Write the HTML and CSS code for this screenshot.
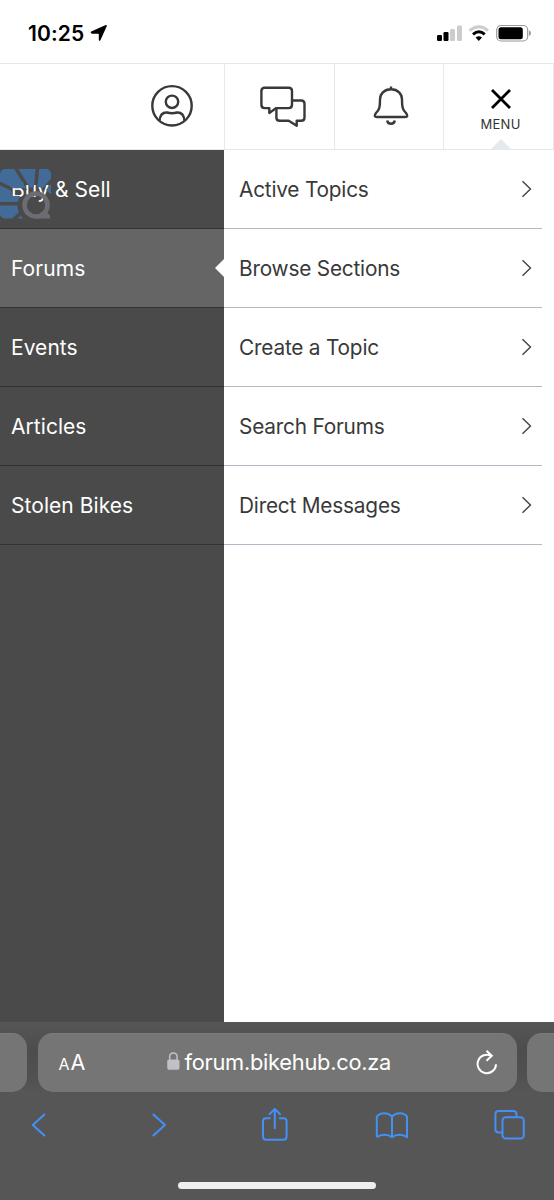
FILE: index.html
```html
<!DOCTYPE html>
<html lang="en">
<head>
<meta charset="utf-8">
<title>Forums menu</title>
<link rel="stylesheet" href="styles.css">
</head>
<body>
<div class="phone">
  <div class="status">
    <span class="time">10:25</span>
    <svg class="location" width="18" height="18" viewBox="0 0 18 18"><path d="M1.2 7.6 15.2 1.2Q17.4.4 16.6 2.6L10.4 16.2Q9.3 17.6 8.8 16V10.2Q8.8 9.7 8.2 9.7H2Q-.2 9 1.2 7.6Z"/></svg>
    <svg class="signals" width="96" height="20" viewBox="436 23 96 20">
      <rect x="437" y="35" width="5" height="6" rx="1.2"/><rect x="443.5" y="32" width="5" height="9" rx="1.2"/>
      <rect x="450" y="29" width="5" height="12" rx="1.2" fill="#ccc"/><rect x="457" y="25.5" width="5" height="15.5" rx="1.2" fill="#ccc"/>
      <path d="M469.5 30.6Q479 22.8 488 30.6" fill="none" stroke="#ccc" stroke-width="3"/>
      <path d="M473 34.3Q479 29.3 484.7 34.3" fill="none" stroke="#000" stroke-width="3"/>
      <path d="M475.6 37.5Q478.8 35.2 482 37.5L478.8 41Z"/>
      <rect x="496.7" y="25.5" width="31" height="15.5" rx="4.5" fill="none" stroke="#999" stroke-width="1.2"/>
      <rect x="498.5" y="27.3" width="24.3" height="12" rx="2.5"/><path d="M529 30.5q2 .8 2 2.7t-2 2.7Z" fill="#999"/>
    </svg>
  </div>
  <header class="nav">
    <div class="cell profile"><svg width="44" height="44" viewBox="150 84 44 44"><circle cx="172" cy="105.8" r="19.7"/><circle cx="172" cy="101.8" r="6.2"/><path d="M159.5 120.7C160 115 163 112.3 167 112.5Q172 114 177 112.5C181 112.3 184 115 184.5 120.7"/></svg></div>
    <div class="cell chat"><svg width="48" height="42" viewBox="259 86 48 42"><path d="M264.7 87.8h24q3.3 0 3.3 3.3v13.7q0 3.3-3.3 3.3h-12.4l-7 4.8v-4.8h-4.6q-3.3 0-3.3-3.3v-13.7q0-3.3 3.3-3.3Z"/><path d="M292 100.5h9.2q3.3 0 3.3 3.3v13.6q0 3.3-3.3 3.3h-4.5v5l-8-5h-9q-3.3 0-3.3-3.3v-9.2"/></svg></div>
    <div class="cell bell"><svg width="38" height="42" viewBox="372 85 38 42"><path d="M391 86.5v2.8C384 89.3 380 94 380 99.5C380 108 379 110 376 113Q373 117 377 117h28Q409 117 406 113C403 110 402 108 402 99.5C402 94 398 89.3 391 89.3M387.2 120.5c.5 4.3 7.1 4.3 7.6 0"/></svg></div>
    <div class="cell menu">
      <svg class="close" width="20" height="20" viewBox="0 0 20 20"><path d="m1 1 18 18M19 1 1 19"/></svg>
      <span>MENU</span><i class="notch"></i>
    </div>
  </header>
  <main class="drawer">
    <nav class="sections">
      <a class="section">Buy &amp; Sell</a>
      <a class="section active">Forums</a>
      <a class="section">Events</a>
      <a class="section">Articles</a>
      <a class="section">Stolen Bikes</a>
      <svg class="logo" width="52" height="50" viewBox="0 169 52 50">
        <mask id="rays" maskUnits="userSpaceOnUse" x="0" y="169" width="52" height="50">
          <rect y="169" width="51" height="49.5" rx="5" fill="#fff"/>
          <circle cx="36" cy="205.5" r="18.5"/>
          <path d="M-1 183 24 195M15 167 30 191M37.5 167 35.5 190M53 179 41 193M-1 203.8H20M12 221 24 210" fill="none" stroke="#000" stroke-width="3.6"/>
          <path d="M11 188.5 26 188V196H12Z"/>
        </mask>
        <rect y="169" width="51" height="50" fill="#426c97" mask="url(#rays)"/>
        <circle cx="36" cy="205" r="11.5" fill="none" stroke="#6b6d72" stroke-width="4.6"/>
        <path d="M36 214.2Q42 214.2 46.5 212L50 215.5V218.6H36Z" fill="#6b6d72"/>
      </svg>
    </nav>
    <nav class="links">
      <a class="link">Active Topics<svg class="chev" width="12" height="18" viewBox="0 0 12 18"><path d="m1.5 1.3 8 7.7-8 7.7"/></svg></a>
      <a class="link">Browse Sections<svg class="chev" width="12" height="18" viewBox="0 0 12 18"><path d="m1.5 1.3 8 7.7-8 7.7"/></svg></a>
      <a class="link">Create a Topic<svg class="chev" width="12" height="18" viewBox="0 0 12 18"><path d="m1.5 1.3 8 7.7-8 7.7"/></svg></a>
      <a class="link">Search Forums<svg class="chev" width="12" height="18" viewBox="0 0 12 18"><path d="m1.5 1.3 8 7.7-8 7.7"/></svg></a>
      <a class="link">Direct Messages<svg class="chev" width="12" height="18" viewBox="0 0 12 18"><path d="m1.5 1.3 8 7.7-8 7.7"/></svg></a>
    </nav>
  </main>
  <footer class="browser">
    <div class="tabs">
      <div class="tab prev"></div>
      <div class="tab address">
        <span class="aa"><small>A</small>A</span>
        <span class="url"><svg width="13" height="18" viewBox="0 0 13 18"><rect x=".3" y="7.5" width="12.2" height="10.2" rx="1.8" fill="#c2c0c7"/><path d="M2.7 8V4.8c0-5 7.4-5 7.4 0V8" fill="none" stroke="#c2c0c7" stroke-width="1.5"/></svg><span>forum.bikehub.co.za</span></span>
        <svg class="reload" width="22" height="26" viewBox="476 1048 22 26"><path d="M496 1063.2A9.2 9.2 0 1 1 491.4 1055M486.5 1049.7 491.8 1054.8 486.5 1059.8"/></svg>
      </div>
      <div class="tab next"></div>
    </div>
    <div class="tools">
      <svg width="16" height="26" viewBox="31 1112 16 26"><path d="m45 1114-12.2 11 12.2 11"/></svg>
      <svg width="16" height="26" viewBox="151 1112 16 26"><path d="m152.8 1114 12.2 11-12.2 11"/></svg>
      <svg width="28" height="36" viewBox="261 1107 28 36"><path d="M270.5 1118.3h-4.3q-3.2 0-3.2 3.2v15q0 3.2 3.2 3.2h17.2q3.2 0 3.2-3.2v-15q0-3.2-3.2-3.2h-4.3M274.8 1129v-19.5M269 1114.7l5.8-5.8 5.8 5.8"/></svg>
      <svg width="34" height="28" viewBox="375 1111 34 28"><path d="M376.8 1137.2V1116.5C380 1112 388 1112 392 1116.5C396 1112 404 1112 407 1116.5V1137.2C403 1133.8 396 1133.8 392 1137.2C388 1133.8 381 1133.8 376.8 1137.2M392 1116.5v20.7"/></svg>
      <svg width="32" height="32" viewBox="494 1109 32 32"><path d="M502.5 1132.5h-3.8q-3.3 0-3.3-3.3v-15q0-3.3 3.3-3.3h14.5q3.3 0 3.3 3.3v3"/><rect x="502.5" y="1117.3" width="21.3" height="21.3" rx="3.3"/></svg>
    </div>
    <div class="home"></div>
  </footer>
</div>
</body>
</html>
```
FILE: styles.css
```css
* { box-sizing: border-box; }
body { margin: 0; font-family: Inter, "Liberation Sans", sans-serif; background: #fff; }
svg { display: block; flex: none; }
.phone { width: 554px; height: 1200px; display: flex; flex-direction: column; overflow: hidden; }
.status { height: 63px; display: flex; align-items: flex-start; padding: 23px 22px 0 28px; }
.time { width: 57px; font-size: 21px; font-weight: 600; line-height: 22px; letter-spacing: .1px; }
.location { margin: 1px 0 0 5px; }
.signals { margin-left: auto; }
.nav { height: 87px; display: grid; grid-template-columns: 225px 110px 109px 110px; border-top: 1px solid #e7e7ea; border-bottom: 1px solid #e5e8eb; }
.cell { border-right: 1px solid #e5e9ed; display: flex; align-items: center; justify-content: center; }
.cell svg { fill: none; stroke: #393939; stroke-width: 2.4; stroke-linejoin: round; }
.profile { justify-content: flex-end; padding: 0 30px 2px 0; }
.chat { padding-left: 7px; }
.bell { padding: 0 0 1px 4px; }
.menu { position: relative; flex-direction: column; justify-content: flex-start; padding: 25px 0 0 4px; font-size: 13px; line-height: 16px; letter-spacing: .3px; color: #333; }
.menu .close { stroke: #000; stroke-width: 2.8; margin: 0 0 7px; }
.notch { position: absolute; bottom: 0; left: 47px; width: 20px; height: 10px; background: #e5e9ec; clip-path: polygon(50% 0, 100% 100%, 0 100%); }
.drawer { height: 872px; display: flex; }
.sections { position: relative; width: 224px; background: #4a4a4a; color: #fff; }
.section { position: relative; display: flex; align-items: center; height: 79px; padding: 0 11px; border-bottom: 1px solid #333; font-size: 21px; letter-spacing: .05px; }
.active { background: #656565; }
.active::after { content: ""; position: absolute; right: 0; top: 30px; width: 9px; height: 18px; background: #fff; clip-path: polygon(0 50%, 100% 0, 100% 100%); }
.logo { position: absolute; left: 0; top: 19px; }
.links { flex: 1; padding-right: 12px; color: #393939; }
.link { display: flex; align-items: center; justify-content: space-between; height: 79px; padding: 0 9px 0 15px; border-bottom: 1px solid #afbac4; font-size: 20.8px; letter-spacing: -.2px; }
.chev { fill: none; stroke: #444; stroke-width: 1.4; margin-top: -1px; }
.browser { height: 178px; background: #565656; display: flex; flex-direction: column; }
.tabs { height: 70px; padding-top: 11px; display: grid; grid-template-columns: 27px 479px 27px; gap: 10.5px; background: linear-gradient(#565656, #4d4d4d 40%, #515151 80%, #565656); }
.tab { height: 59px; background: #757575; border-top: 1px solid #7c7c7c; border-radius: 15px; }
.prev { border-radius: 0 15px 15px 0; }
.next { border-radius: 15px 0 0 15px; }
.address { display: flex; align-items: center; padding: 0 19px 2px 21px; color: #fff; }
.aa { width: 108px; font-size: 21.5px; }
.aa small { font-size: 16px; margin-right: 1px; }
.url { display: flex; align-items: center; gap: 5px; font-size: 21.8px; letter-spacing: -.25px; }
.url svg { margin-top: -2px; }
.reload { fill: none; stroke: #fff; stroke-width: 2; margin: -1px 0 0 auto; }
.tools { height: 66px; display: grid; grid-template-columns: 120px 110px 114px 119px 32px; align-items: center; padding-left: 31px; }
.tools svg { fill: none; stroke: #4390f7; stroke-width: 2; stroke-linejoin: round; }
.home { width: 198px; height: 7px; margin: 24px auto 0; background: #eee; border-radius: 4px; }
```
